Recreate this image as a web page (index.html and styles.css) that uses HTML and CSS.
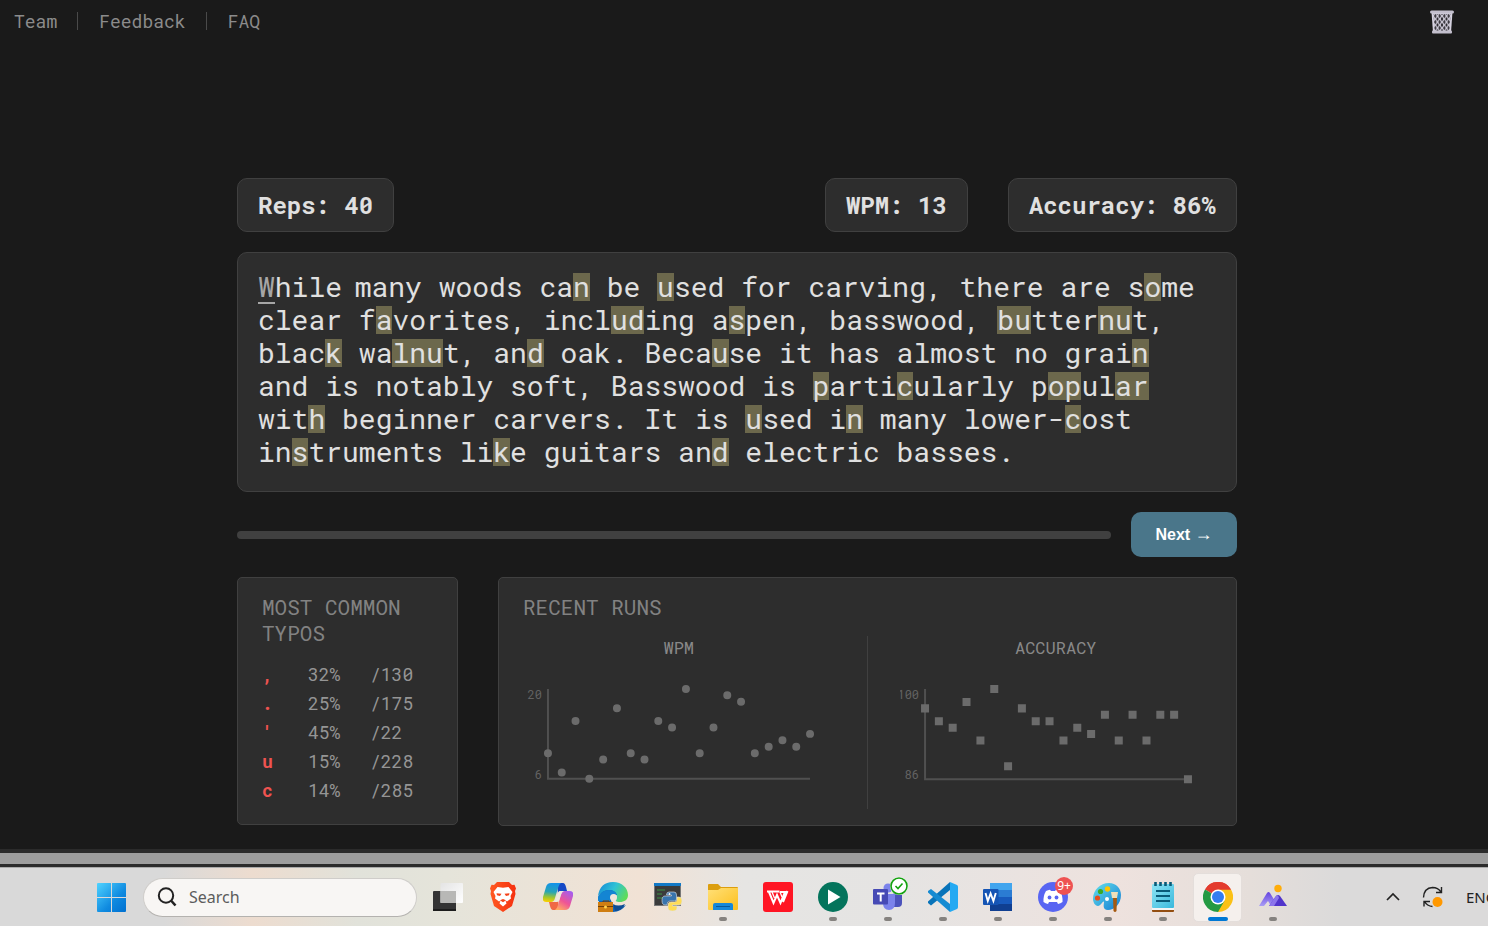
FILE: index.html
```html
<!DOCTYPE html>
<html lang="en">
<head>
<meta charset="utf-8">
<meta name="viewport" content="width=device-width, initial-scale=1">
<title>Typing practice</title>
<link rel="stylesheet" href="styles.css">
</head>
<body>
<header class="topbar">
  <nav class="links">
    <a href="#team">Team</a><span class="sep"></span><a href="#feedback">Feedback</a><span class="sep"></span><a href="#faq">FAQ</a>
  </nav>
  <button class="trash" aria-label="Clear data">
    <svg viewBox="0 0 26 26" width="26" height="26">
      <defs><pattern id="mesh" patternUnits="userSpaceOnUse" x="4" y="4" width="4.500" height="6"><path d="M2.250 .500l1.200 2.500-1.200 2.500L1.050 3zM0-2.500L1.200 0 0 2.500zM4.500-2.500v5L3.300 0zM0 3.500L1.200 6 0 8.500zM4.500 3.500v5L3.300 6z" fill="#29272c"/></pattern></defs>
      <path d="M2.500 3l1.500 20.500h18L23.500 3z" fill="#d6d2e0"/>
      <path d="M4.500 5l1 17h15l1-17z" fill="url(#mesh)"/>
      <rect x="1" y="1.500" width="24" height="3" rx="1.500" fill="#c3bfcd"/>
      <rect x="3" y="21.500" width="20" height="3" rx="1" fill="#c3bfcd"/>
    </svg>
  </button>
</header>

<main class="app">
  <section class="stats">
    <div class="stat first">Reps: 40</div>
    <div class="stat">WPM: 13</div>
    <div class="stat">Accuracy: 86%</div>
  </section>

  <p class="passage"><span class="cursor">W</span>hile<span class="gap"> </span>many woods ca<mark>n</mark> be <mark>u</mark>sed for carving, there are s<mark>o</mark>me clear f<mark>a</mark>vorites, incl<mark>ud</mark>ing a<mark>s</mark>pen, basswood, <mark>bu</mark>tter<mark>nu</mark>t, blac<mark>k</mark> wa<mark>lnu</mark>t, an<mark>d</mark> oak. Beca<mark>u</mark>se it has almost no grai<mark>n</mark> and is notably soft, Basswood is <mark>p</mark>arti<mark>c</mark>ularly p<mark>op</mark>ul<mark>ar</mark> wit<mark>h</mark> beginner carvers. It is <mark>u</mark>sed i<mark>n</mark> many lower-<mark>c</mark>ost in<mark>s</mark>truments li<mark>k</mark>e guitars an<mark>d</mark> electric basses.</p>

  <div class="controls">
    <div class="progress" role="progressbar" aria-label="Progress" aria-valuenow="0" aria-valuemin="0" aria-valuemax="100"></div>
    <button class="next">Next <span class="arrow">→</span></button>
  </div>

  <div class="panels">
    <section class="card typos">
      <h2>MOST COMMON TYPOS</h2>
      <table>
        <tbody>
          <tr><th scope="row">,</th><td>32%</td><td>/130</td></tr>
          <tr><th scope="row">.</th><td>25%</td><td>/175</td></tr>
          <tr><th scope="row">'</th><td>45%</td><td>/22</td></tr>
          <tr><th scope="row">u</th><td>15%</td><td>/228</td></tr>
          <tr><th scope="row">c</th><td>14%</td><td>/285</td></tr>
        </tbody>
      </table>
    </section>
    <section class="card runs">
      <h2>RECENT RUNS</h2>
      <div class="charts">
        <div class="chart">
          <h3>WPM</h3>
          <svg viewBox="0 0 312 149">
            <path class="axis" d="M25 29V119H287.500"/>
            <text x="19" y="39">20</text><text x="19" y="119">6</text>
            <path class="dots" d="M25 93.300h0M38.800 112.600h0M52.600 61.100h0M66.400 119h0M80.300 99.700h0M94.100 48.300h0M107.900 93.300h0M121.700 99.700h0M135.500 61.100h0M149.300 67.600h0M163.200 29h0M177 93.300h0M190.800 67.600h0M204.600 35.400h0M218.400 41.900h0M232.200 93.300h0M246.100 86.900h0M259.900 80.400h0M273.700 86.900h0M287.500 74h0"/>
          </svg>
        </div>
        <div class="chart">
          <h3>ACCURACY</h3>
          <svg viewBox="0 0 312 149">
            <path class="axis" d="M25 29V119H287.500"/>
            <text x="19" y="39">100</text><text x="19" y="119">86</text>
            <path class="squares" d="M21 48.300h8M34.800 61.100h8M48.600 67.600h8M62.400 41.900h8M76.300 80.400h8M90.100 29h8M103.900 106.100h8M117.700 48.300h8M131.500 61.100h8M145.300 61.100h8M159.200 80.400h8M173 67.600h8M186.800 74h8M200.600 54.700h8M214.400 80.400h8M228.200 54.700h8M242.100 80.400h8M255.900 54.700h8M269.700 54.700h8M283.500 119h8"/>
          </svg>
        </div>
      </div>
    </section>
  </div>
</main>

<div class="scrollbar"><div class="thumb"></div></div>

<footer class="taskbar">
  <button class="start" aria-label="Start">
    <svg viewBox="0 0 29 29" width="29" height="29">
      <defs><linearGradient id="win" gradientUnits="userSpaceOnUse" x1="0" y1="0" x2="29" y2="29"><stop offset="0" stop-color="#4fd3ff"/><stop offset=".6" stop-color="#0f8ae0"/><stop offset="1" stop-color="#0070d0"/></linearGradient></defs>
      <path d="M0 1q0-1 1-1h13v14H0zM15 0h13q1 0 1 1v13H15zM0 15h14v14H1q-1 0-1-1zM15 15h14v13q0 1-1 1H15z" fill="url(#win)"/>
    </svg>
  </button>
  <label class="search">
    <svg viewBox="0 0 20 20" width="20" height="20" fill="none" stroke="#222" stroke-width="2"><circle cx="9" cy="8.500" r="7.200"/><path d="M14 13.500l4.500 5" stroke-width="2.600"/></svg>
    <input type="text" placeholder="Search" aria-label="Search">
  </label>

  <div class="apps">
    <button class="app-icon" aria-label="Task view"><svg viewBox="0 0 30 30">
      <defs><linearGradient id="tv" x1="0" y1="0" x2="1" y2="1"><stop offset="0" stop-color="#e4e4e4"/><stop offset="1" stop-color="#fff"/></linearGradient></defs>
      <rect y="9" width="23" height="20" rx="1" fill="#343434"/><rect y="27" width="23" height="2" fill="#1c1c1c"/><rect x="7.500" y="1" width="22.500" height="20" rx="1" fill="url(#tv)"/><path d="M7.500 9H23v12H7.500z" fill="#b8b8b6"/></svg></button>
    <button class="app-icon" aria-label="Brave"><svg viewBox="0 0 30 30">
      <defs><linearGradient id="br"><stop offset="0" stop-color="#ff5a22"/><stop offset="1" stop-color="#f5300f"/></linearGradient></defs>
      <path d="M9 0h12l3 3 2.500-.300L28 6.500 27 9l.500 3-3.500 12-9 6-9-6L2.500 12 3 9 2 6.500l1.500-3.800L6 3z" fill="url(#br)"/>
      <path d="M9.500 5l5.500.800L20.500 5l4 5-2 4 .500 2.500-4 3-1.500-1 1 3-3.500 3-3.500-3 1-3-1.500 1-4-3 .500-2.500-2-4z" fill="#fff"/>
      <path d="M8.500 11.200l5 .600-1.500 2.200-3-.800zM21.500 11.200l-5 .600 1.500 2.200 3-.800zM12 18.300l3-1.300 3 1.300-3 2z" fill="#f5431a"/></svg></button>
    <button class="app-icon" aria-label="Copilot"><svg viewBox="0 0 30 30">
      <defs><linearGradient id="c1" x1=".3" y1="0" x2=".2" y2="1"><stop offset="0" stop-color="#1493e8"/><stop offset=".45" stop-color="#27a5b6"/><stop offset=".75" stop-color="#a4c62c"/><stop offset="1" stop-color="#ffd000"/></linearGradient><linearGradient id="c2" x1=".8" y1="0" x2=".2" y2="1"><stop offset="0" stop-color="#a45df0"/><stop offset=".55" stop-color="#ef5595"/><stop offset="1" stop-color="#ffae61"/></linearGradient></defs>
      <path d="M14 1h6q2 0 3 4l1 4h-5q-3 0-4 3z" fill="#1549c6"/><path d="M16 28h-6q-2 0-3-4l-1-4h5q3 0 4-3z" fill="#f06945"/>
      <path d="M8 1h10q-2 1-3 5l-3 10q-1 4-4 4H3q-4 0-3-5L3 5q1-4 5-4z" fill="url(#c1)"/>
      <path d="M22 28H12q2-1 3-5l3-10q1-4 4-4h5q4 0 3 5l-3 10q-1 4-5 4z" fill="url(#c2)"/>
      <path d="M16.500 9h4q-2 1-3 4.500l-1.500 5q-.700 1.500-2.500 1.500H11q1.500-.800 2.300-3.500l1.200-4.500q.600-2.500 2-3z" fill="#eee9de"/></svg></button>
    <button class="app-icon" aria-label="Edge"><svg viewBox="0 0 30 30">
      <defs><linearGradient id="ed" x1="0" y1=".2" x2="1" y2=".6"><stop offset="0" stop-color="#188ed7"/><stop offset=".5" stop-color="#2fc2d5"/><stop offset="1" stop-color="#60dc57"/></linearGradient></defs>
      <path d="M0 14Q2 0 15 0c9 0 15 6 15 13 0 5-4 7-8 7-4 0-5-1-4-3 2-4-1-7-5-7Q5 9 0 14z" fill="url(#ed)"/>
      <path d="M0 15q4-7 11-7 6 0 8 5-6-2-6 5 1 7 8 7 4 0 7-2-5 7-13 7Q2 30 0 15z" fill="#1262b5"/><path d="M0 15q4-7 11-7 6 0 8 5-6-2-7 6H0z" fill="#1485d3"/>
      <circle cx="15.500" cy="15.500" r="3.500" fill="#f1e6dc"/>
      <path d="M15 22q5 3 12 0-3 7-10 7z" fill="#0d4c93"/><path d="M5 20v-1h6v1" fill="none" stroke="#713b08"/><rect y="20" width="15" height="10" fill="#cf7e12"/><path d="M0 24h15v1H0z" fill="#744006"/><circle cx="7.500" cy="25" r="1.500" fill="#ffd34d"/></svg></button>
    <button class="app-icon" aria-label="Python terminal"><svg viewBox="0 0 30 30">
      <rect x="1" y="1" width="27" height="23" fill="#777"/><rect x="2" y="3" width="25" height="20" fill="#3b3b3b"/><path d="M1 1h27v3H1z" fill="#1279c7"/><path d="M4 8h8M4 12h5M4 16h6" stroke="#3c9445" stroke-width="1"/>
      <g stroke="#dfe3e6" stroke-width=".600"><path d="M16 10h5q2.500 0 2.500 3v4q0 2-2 2h-4.500q-3 0-3 4h-2q-3 0-3-4.500T12 14h6.500v-1h-5q0-3 2.500-3z" fill="#3874ad"/><path d="M24 15h2q3 0 3 4t-3 4h-6.500v1h4.500v2q0 3-4.500 3t-4.500-3v-3q0-3 3-3h3.500q2.500 0 2.500-3z" fill="#ffdc55"/></g><circle cx="16.500" cy="12" r=".9" fill="#fff"/></svg></button>
    <button class="app-icon open" aria-label="File Explorer"><svg viewBox="0 0 30 30">
      <defs><linearGradient id="fe" x1="0" y1="0" x2="1" y2="1"><stop offset="0" stop-color="#ffe078"/><stop offset="1" stop-color="#fdbf1c"/></linearGradient></defs>
      <path d="M0 3q0-1 1-1h9l3 3h16q1 0 1 1v6H0z" fill="#dc9e0e"/><path d="M0 8h10l3-2h17v21q0 1-1 1H1q-1 0-1-1z" fill="url(#fe)"/><path d="M5 28v-5q0-2 2-2h16q2 0 2 2v5z" fill="#1688da"/><path d="M8 24.500h14" stroke="#075a9d" stroke-width="1"/></svg></button>
    <button class="app-icon" aria-label="WPS Office"><svg viewBox="0 0 30 30">
      <rect width="30" height="30" rx="3" fill="#ff1524"/><path d="M4 9.500h12.500M6 10l4.500 11 3.500-8 3.500 8L22 10h-5M24.500 9l-4.500 11" fill="none" stroke="#fff" stroke-width="2"/><path d="M9 10l2.500 6M17 10l2 5" stroke="#fff" stroke-width="1.300"/></svg></button>
    <button class="app-icon open" aria-label="Media player"><svg viewBox="0 0 30 30">
      <circle cx="15" cy="15" r="15" fill="#04745c"/><path d="M10 7.500v15L22.500 15z" fill="#fff"/></svg></button>
    <button class="app-icon open" aria-label="Teams"><svg viewBox="0 0 30 30">
      <circle cx="24" cy="9" r="4" fill="#4d55bd"/><path d="M20 13h9v8q0 4-4 4h-5z" fill="#4c53bc"/><circle cx="15" cy="6" r="4.500" fill="#7b83eb"/><path d="M10 12h12v9q0 7-6 7t-6-7z" fill="#7b83eb"/><rect y="7" width="15" height="15.500" rx="1" fill="#464ab5"/><path d="M4 11.500h7.500M7.700 11.500v8" stroke="#fff" stroke-width="2"/></svg>
      <span class="badge ok"><svg viewBox="0 0 18 18"><circle cx="9" cy="9" r="8" fill="#fff" stroke="#13a10e" stroke-width="1.600"/><path d="M5.500 9l2.500 2.500 4.500-5" fill="none" stroke="#13a10e" stroke-width="1.600"/></svg></span></button>
    <button class="app-icon open" aria-label="VS Code"><svg viewBox="0 0 30 30">
      <path d="M22 0l7 3q1 .5 1 2v20q0 1.500-1 2l-7 3z" fill="#24a9f2"/><path d="M22 0v8L3 23.500 0 21v-1.500z" fill="#0873b9"/><path d="M22 30v-8L3 7 0 9v1.500z" fill="#168bd2"/></svg></button>
    <button class="app-icon open" aria-label="Word"><svg viewBox="0 0 30 30">
      <path d="M7 1h22v7H7z" fill="#41a5ee"/><path d="M7 8h22v7H7z" fill="#2b7cd3"/><path d="M7 15h22v7H7z" fill="#185abd"/><path d="M7 22h22v7H7z" fill="#103f91"/><rect y="7" width="15.500" height="16" rx="1" fill="#1554b4"/><path d="M2.500 11l2.300 8L7.600 11.500l2.800 7.500L12.800 11" fill="none" stroke="#fff" stroke-width="1.900"/></svg></button>
    <button class="app-icon open" aria-label="Discord"><svg viewBox="0 0 30 30">
      <circle cx="15" cy="15" r="15" fill="#5865f2"/><path d="M8 9q2-1 4-1.300l1 1.300h4l1-1.300q2 .3 4 1.300 3 5 2.500 11-2 1.500-4.500 2l-1-2h-8l-1 2q-2.500-.5-4.500-2Q5 14 8 9z" fill="#fff"/><circle cx="11.500" cy="15.500" r="1.900" fill="#5865f2"/><circle cx="18.500" cy="15.500" r="1.900" fill="#5865f2"/></svg><span class="badge count">9+</span></button>
    <button class="app-icon open" aria-label="Paint"><svg viewBox="0 0 30 30">
      <defs><linearGradient id="pt" x1="0" y1="0" x2="1" y2="1"><stop offset="0" stop-color="#65e1ee"/><stop offset="1" stop-color="#137bd2"/></linearGradient></defs>
      <path d="M16 1c7 0 12 5 12 12 0 9-7 15-13 15-6 0-4-6-4-8-1-2-3 4-6 4S0 20 0 17C0 8 7 1 16 1z" fill="url(#pt)"/><circle cx="14.500" cy="7" r="2.700" fill="#ffc400"/><circle cx="7.500" cy="9.500" r="2.600" fill="#3baa29"/><circle cx="4.500" cy="16" r="2.600" fill="#e84e1b"/><circle cx="14" cy="17" r="2" fill="#fff"/><path d="M20 15h4l-.500 14q-1.500 2-3 0z" fill="#a55a11"/><path d="M18 10h7l-1 6h-5z" fill="#f0dfb9"/></svg></button>
    <button class="app-icon open" aria-label="Notepad"><svg viewBox="0 0 30 30">
      <defs><linearGradient id="np" x1="0" y1="0" x2="1" y2="1"><stop offset="0" stop-color="#8ee5f5"/><stop offset="1" stop-color="#3ab8dc"/></linearGradient></defs>
      <path d="M4 27h22v2q0 1-1 1H5q-1 0-1-1z" fill="#934e11"/><path d="M4 24h22v4H4z" fill="#f4f4f4"/><rect x="4" y="2" width="22" height="24" rx="1" fill="url(#np)"/><path d="M8 9h14M8 14h14M8 19h14" stroke="#095a78" stroke-width="2"/><path d="M7.500 0v4M12.500 0v4M17.500 0v4M22.500 0v4" stroke="#095a78" stroke-width="2.600"/></svg></button>
    <button class="app-icon open active" aria-label="Chrome"><svg viewBox="0 0 30 30">
      <path d="M15 15L2 7.500A15 15 0 0 1 28 7.500z" fill="#e33b2e"/><path d="M15 15V7.500h13A15 15 0 0 1 15 30z" fill="#fbc116"/><path d="M15 15l6.500 3.700L15 30A15 15 0 0 1 2 7.500z" fill="#249a43"/><path d="M2 7.500A15 15 0 0 1 28 7.500H15z" fill="#e33b2e"/><circle cx="15" cy="15" r="7.500" fill="#fff"/><circle cx="15" cy="15" r="6" fill="#347df0"/></svg></button>
    <button class="app-icon open" aria-label="Photo app"><svg viewBox="0 0 30 30">
      <defs><linearGradient id="ph" x1="0" y1="0" x2="0" y2="1"><stop offset="0" stop-color="#6443df"/><stop offset="1" stop-color="#a99df5"/></linearGradient></defs>
      <path d="M1 24l8-13q1.500-2 3 0l8 13h-7l-3-5-4 5z" fill="url(#ph)"/><path d="M11 24l7-10q2-2 4 0l7 10z" fill="#5135cb"/><path d="M11 24l7-10q2-2 3 2l-5 8z" fill="#8c75ec"/><circle cx="20" cy="6.500" r="3.700" fill="#ffad0a"/></svg></button>
  </div>

  <div class="tray">
    <button aria-label="Show hidden icons"><svg viewBox="0 0 14 14" width="14" height="14" fill="none" stroke="#222" stroke-width="1.700"><path d="M1 10l6-6 6 6"/></svg></button>
    <button aria-label="Updates available"><svg viewBox="0 0 22 22" width="22" height="22" fill="none" stroke="#222" stroke-width="1.400"><path d="M1.500 11.500Q2 2 10.500 1.500 16 1.500 19 6M19.500 1v5.500H14M2 20.500V15.500h6M2.500 15.500Q5 20 10.500 20.500"/><circle cx="15.500" cy="16" r="5" fill="#ff9800" stroke="none"/></svg></button>
    <button class="lang">ENG</button>
  </div>
</footer>
</body>
</html>
```

FILE: styles.css
```css
* { box-sizing: border-box; }

:root {
  --mono: "Roboto Mono", "DejaVu Sans Mono", monospace;
  --panel: #2d2d2d;
  --line: #404040;
}

body {
  margin: 0;
  min-height: 100vh;
  display: flex;
  flex-direction: column;
  overflow-x: hidden;
  background: #1a1a1a;
  color: #e0e0e0;
  font-family: var(--mono);
}

h2, h3, p { margin: 0; }

button {
  border: 0;
  padding: 0;
  background: none;
  color: inherit;
}

svg { display: block; }

.topbar {
  display: flex;
  align-items: center;
  justify-content: space-between;
  height: 44px;
  padding: 0 33px 0 14px;
}

.links {
  display: flex;
  align-items: center;
  gap: 20px;
  padding-bottom: 2px;
}

.links a {
  color: #8b8b8b;
  font-size: 18px;
  line-height: 24px;
  text-decoration: none;
}

.sep {
  width: 2px;
  height: 18px;
  border-left: 1px solid #4a4a4a;
}

.app {
  flex: 1;
  display: flex;
  flex-direction: column;
  gap: 20px;
  width: 100%;
  max-width: 1014px;
  margin: 0 auto;
  padding: 134px 14px 20px 0;
}

.stats {
  display: flex;
  gap: 40px;
}

.stat {
  padding: 10px 20px;
  border: 1px solid var(--line);
  border-radius: 10px;
  background: var(--panel);
  font-size: 24px;
  font-weight: 700;
  line-height: 32px;
}

.stat.first { margin-right: auto; }

.passage {
  padding: 17px 30px 23px 20px;
  border: 1px solid var(--line);
  border-radius: 10px;
  background: var(--panel);
  font-size: 28px;
  line-height: 33px;
}

.passage mark {
  background: linear-gradient(#6c684c, #6c684c) 0 5px / 100% 28px no-repeat;
  color: inherit;
}

.cursor {
  background: linear-gradient(#a6a6a6, #a6a6a6) 0 34px / 100% 2px no-repeat;
  color: #a6a6a6;
}

.gap {
  font-size: 21px;
  line-height: 21px;
}

.controls {
  display: flex;
  align-items: center;
  gap: 20px;
}

.progress {
  flex: 1;
  height: 8px;
  border-radius: 4px;
  background: var(--line);
}

.next {
  width: 106px;
  height: 45px;
  border-radius: 10px;
  background: #4a768a;
  color: #fff;
  font-family: "Liberation Sans", Arial, sans-serif;
  font-size: 16px;
  font-weight: 700;
}

.arrow {
  font-family: "Liberation Serif", serif;
  font-size: 18px;
  font-weight: 400;
  line-height: 16px;
}

.panels {
  display: flex;
  align-items: flex-start;
  gap: 40px;
}

.card {
  padding: 16px 24px;
  border: 1px solid var(--line);
  border-radius: 5px;
  background: var(--panel);
}

.card h2 {
  color: #828282;
  font-size: 21px;
  font-weight: 400;
  line-height: 26px;
}

.typos {
  flex: 0 0 221px;
  padding-bottom: 19px;
}

.typos table {
  margin-top: 14px;
  border-collapse: collapse;
  color: #959595;
  font-size: 18px;
  line-height: 29px;
}

.typos th,
.typos td {
  padding: 0;
  text-align: left;
}

.typos th {
  width: 46px;
  color: #ef5350;
}

.typos td:nth-child(2) { width: 62px; }

.runs { flex: 1; }

.charts {
  display: grid;
  grid-template-columns: 1fr 1fr;
  margin-top: 16px;
}

.chart:first-child {
  padding-right: 32px;
  border-right: 1px solid var(--line);
}

.chart:last-child { padding-left: 32px; }

.chart h3 {
  color: #888;
  font-size: 17px;
  font-weight: 400;
  line-height: 24px;
  text-align: center;
}

.chart svg {
  width: 100%;
  overflow: hidden;
}

.chart text {
  fill: #626262;
  font-size: 12px;
  text-anchor: end;
}

.axis {
  fill: none;
  stroke: #505050;
  stroke-width: 2;
}

.dots {
  fill: none;
  stroke: #6b6b6b;
  stroke-linecap: round;
  stroke-width: 8;
}

.squares {
  fill: none;
  stroke: #6b6b6b;
  stroke-width: 8;
}

.scrollbar {
  padding: 4px 0 3px;
  background: #2b2b2b;
}

.thumb {
  height: 11px;
  background: #9e9e9e;
}

.taskbar {
  display: flex;
  align-items: center;
  height: 59px;
  padding-left: 97px;
  border-top: 1px solid #aaa;
  background: linear-gradient(90deg, #d9d9d9 0, #d9d9d9 11%, #eddccf 17%, #e1e2da 24%, #e5e4da 30%, #f1e2d5 43%, #e6e5e3 50%, #e5e4e3 60%, #eee2de 75%, #e5deda 84%, #dbdada 90%);
}

.start { margin-right: 17px; }

.search {
  display: flex;
  align-items: center;
  gap: 12px;
  width: 274px;
  height: 39px;
  margin-right: 3px;
  padding: 0 13px;
  border: 1px solid #cfcdca;
  border-bottom-color: #b4b2af;
  border-radius: 20px;
  background: #f8f6f4;
}

.search svg { flex: none; }

.search input {
  width: 100%;
  padding: 0;
  border: 0;
  outline: 0;
  background: none;
  font-family: "Noto Sans", sans-serif;
  font-size: 16px;
}

.search input::placeholder {
  color: #5c5c5c;
  opacity: 1;
}

.apps { display: flex; }

.app-icon {
  position: relative;
  display: flex;
  align-items: center;
  justify-content: center;
  width: 55px;
  height: 58px;
}

.app-icon > svg {
  position: relative;
  width: 30px;
  height: 30px;
}

.app-icon.open::after {
  content: "";
  position: absolute;
  bottom: 5px;
  width: 8px;
  height: 4px;
  border-radius: 2px;
  background: #85827f;
}

.app-icon.active::before {
  content: "";
  position: absolute;
  inset: 5px 3px 4px;
  border: 1px solid #e4dedb;
  border-radius: 5px;
  background: #f5f0ed;
}

.app-icon.active::after {
  width: 20px;
  background: #0078d4;
}

.badge {
  position: absolute;
  top: 9px;
  right: 7px;
  width: 18px;
  height: 18px;
  border-radius: 50%;
}

.badge.ok { background: #fff; }

.badge.count {
  background: #ee5252;
  color: #fff;
  font: 12px/18px "Noto Sans", sans-serif;
  text-align: center;
}

.tray {
  display: flex;
  align-items: center;
  gap: 22px;
  width: 102px;
  margin-left: auto;
  overflow: hidden;
}

.tray button { flex: none; }

.lang {
  color: #222;
  font-family: "Noto Sans", sans-serif;
  font-size: 15px;
}
```
